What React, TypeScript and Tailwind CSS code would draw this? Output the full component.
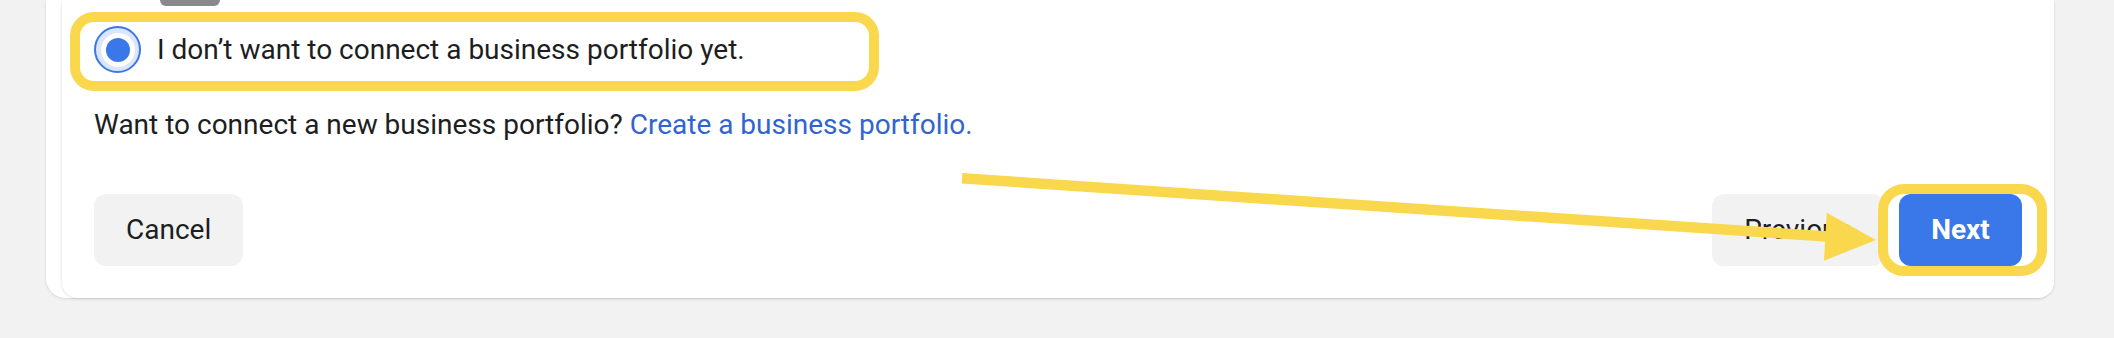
import React from 'react';

const App: React.FC = () => {
  return (
    <div className="relative h-[338px] w-full overflow-hidden bg-[#f2f2f2] font-['Roboto','Liberation_Sans',sans-serif] text-[#1c1e21]">
      {/* stacked card */}
      <div className="ml-[46px] w-[2008px] rounded-bl-[20px] rounded-br-[16px] bg-white shadow-[0_1px_3px_rgba(0,0,0,0.12)]">
        <div className="ml-[16px] rounded-bl-[16px] rounded-br-[16px] bg-white px-[32px] pb-[32px] shadow-[-1px_1px_2px_rgba(0,0,0,0.08)]">
          <div className="ml-[66px] h-[6px] w-[60px] rounded-b-[8px] bg-[#8a8a8c]" />

          <label className="mt-[20px] flex h-[47px] items-center gap-[16px]">
            <span className="flex h-[47px] w-[47px] items-center justify-center rounded-full border-2 border-[#3a77e9] bg-[#dbe5fb]">
              <span className="flex h-[34px] w-[34px] items-center justify-center rounded-full bg-white">
                <span className="h-[24px] w-[24px] rounded-full bg-[#3a77e9]" />
              </span>
            </span>
            <span className="text-[28px] leading-[36px]">I don’t want to connect a business portfolio yet.</span>
          </label>

          <p className="mt-[34px] text-[28px] leading-[36px]">
            Want to connect a new business portfolio?{' '}
            <a className="text-[#3264d0]">Create a business portfolio.</a>
          </p>

          <div className="mt-[51px] flex items-center justify-between">
            <button className="h-[72px] rounded-[12px] bg-[#f2f2f2] px-[32px] text-[28px] leading-[36px]">
              Cancel
            </button>
            <div className="flex items-center gap-[15px]">
              <button className="h-[72px] rounded-[12px] bg-[#f2f2f2] px-[32px] text-[28px] leading-[36px]">
                Previous
              </button>
              <button className="h-[72px] w-[123px] rounded-[12px] bg-[#3a77e9] text-[28px] font-bold leading-[36px] text-white">
                Next
              </button>
            </div>
          </div>
        </div>
      </div>

      {/* annotations */}
      <div className="absolute left-[70px] top-[12px] h-[79px] w-[809px] rounded-[24px] border-[10px] border-[#f9d84e]" />
      <div className="absolute left-[1878px] top-[184px] h-[92px] w-[169px] rounded-[26px] border-[10px] border-[#f9d84e]" />
      <svg className="absolute left-0 top-0" width="2114" height="338" viewBox="0 0 2114 338">
        <line x1="962" y1="178.3" x2="1832" y2="236.8" stroke="#f9d84e" strokeWidth="10.5" />
        <polygon points="1826.7,212.7 1876,240 1824,260.7" fill="#f9d84e" />
      </svg>
    </div>
  );
};

export default App;
